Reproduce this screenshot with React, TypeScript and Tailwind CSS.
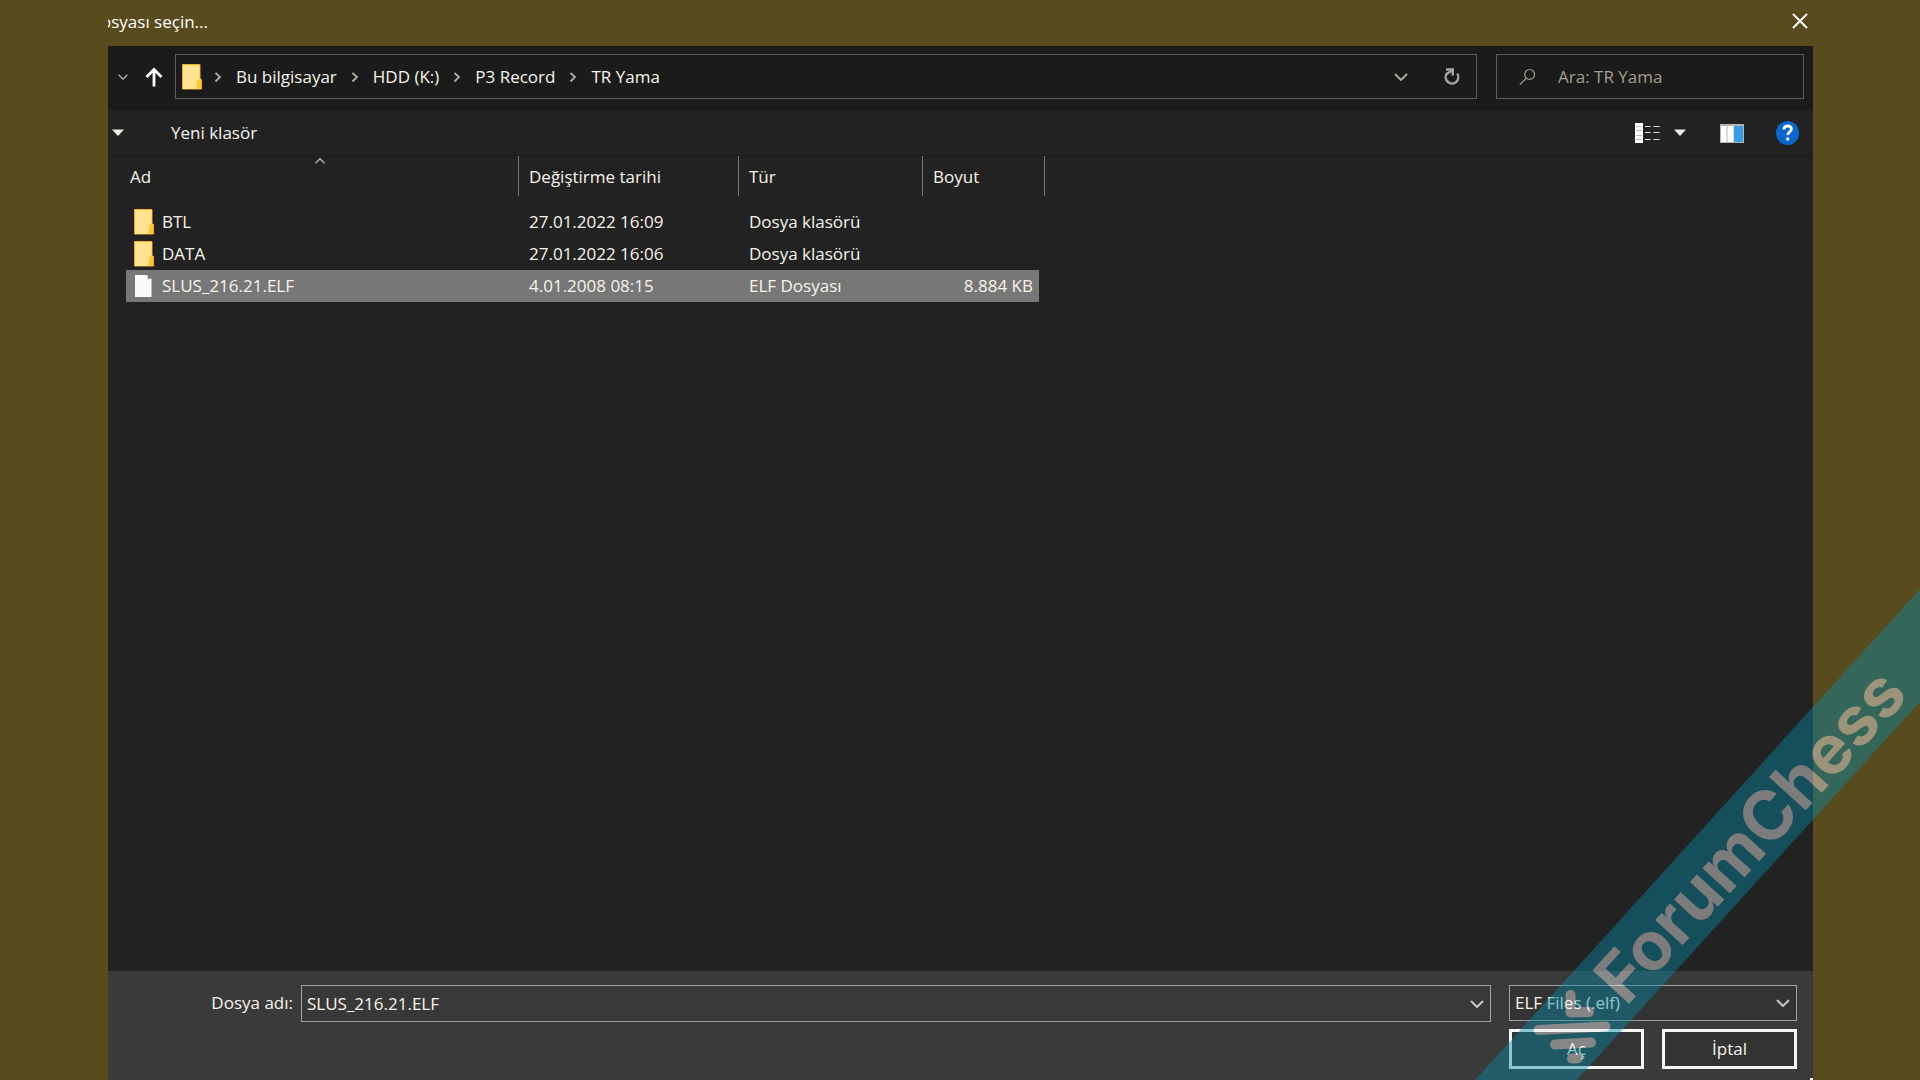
import { Fragment, useState } from 'react';

type FileKind = 'folder' | 'file';

interface FileRow {
  name: string;
  modified: string;
  type: string;
  size: string;
  kind: FileKind;
}

const PATH = ['Bu bilgisayar', 'HDD (K:)', 'P3 Record', 'TR Yama'];

const FILES: FileRow[] = [
  { name: 'BTL', modified: '27.01.2022 16:09', type: 'Dosya klasörü', size: '', kind: 'folder' },
  { name: 'DATA', modified: '27.01.2022 16:06', type: 'Dosya klasörü', size: '', kind: 'folder' },
  { name: 'SLUS_216.21.ELF', modified: '4.01.2008 08:15', type: 'ELF Dosyası', size: '8.884 KB', kind: 'file' },
];

// --- Icons ---
const Chevron = ({ className }: { className: string }) => (
  <svg className={className} viewBox="0 0 14 8" fill="none" stroke="currentColor" strokeWidth="2">
    <path d="M1 1l6 6 6-6" />
  </svg>
);

const CrumbChevron = () => (
  <svg className="h-3 w-2 text-[#b5aca0]" viewBox="0 0 8 12" fill="none" stroke="currentColor" strokeWidth="1.8">
    <path d="M1.5 2L6 6l-4.500 4.500" />
  </svg>
);

const Caret = () => (
  <svg className="h-2 w-3 text-[#f0ece2]" viewBox="0 0 12 8" fill="currentColor">
    <path d="M0 0.500h12L6 7z" />
  </svg>
);

const FolderIcon = () => (
  <svg className="h-[26px] w-5 shrink-0" viewBox="0 0 20 26">
    <path d="M0.500 0.500h17.500v14l1.500 1v9.500h-19z" fill="#fbcf45" stroke="#e8ae1c" />
    <path d="M1 1h16.500v13.500l-2.500 3L14.500 25H1z" fill="#ffe391" />
    <path d="M17.500 14.500l1.500 1.500v9h-4l.5-7.500z" fill="#ffc629" />
  </svg>
);

const FileIcon = () => (
  <svg className="h-[26px] w-5 shrink-0" viewBox="0 0 20 26">
    <path d="M1 2h12l4.500 4v18H1z" fill="#fafafa" />
    <path d="M13 2v4h4.500z" fill="#5b6468" />
    <path d="M13.500 2.500v3.500h4" fill="none" stroke="#d8dcdc" />
  </svg>
);

const UpArrow = () => (
  <svg className="h-5 w-[18px]" viewBox="0 0 18 20" fill="none" stroke="#fff" strokeWidth="2.800">
    <path d="M9 19.500V3M1.500 10L9 2.500l7.500 7.500" />
  </svg>
);

const RefreshIcon = () => (
  <svg className="h-[18px] w-4" viewBox="0 0 16 18" fill="none" stroke="#aaa59d" strokeWidth="2.400">
    <path d="M13.200 5.600a6.300 6.300 0 1 1-10.600.300L8 2.400" />
    <path d="M2 1.500h6.800v6" />
  </svg>
);

const SearchIcon = () => (
  <svg className="h-5 w-5" viewBox="0 0 20 20" fill="none" stroke="#a49e8d" strokeWidth="1.400">
    <circle cx="12.500" cy="7" r="5.800" />
    <path d="M8.500 11.500L1 19" />
  </svg>
);

const CloseIcon = () => (
  <svg className="size-4" viewBox="0 0 16 16" fill="none" stroke="#fff" strokeWidth="1.800">
    <path d="M1 1l14 14M15 1L1 15" />
  </svg>
);

const ViewIcon = () => (
  <svg className="h-5 w-[25px]" viewBox="0 0 25 20">
    <rect width="8" height="20" fill="#fff" />
    <path d="M1 3.500h6M1 7.500h6M1 12.500h6M1 16.500h6" stroke="#b9bcc0" />
    <path d="M10 3.500h5.500M18.500 3.500h6M10 9.500h5.500M18.500 9.500h6M10 16.500h5.500M18.500 16.500h6" stroke="#e4e0dc" />
  </svg>
);

const PaneIcon = () => (
  <svg className="h-5 w-6" viewBox="0 0 24 20">
    <rect y="1" width="24" height="19" fill="#b9b4b4" />
    <rect x="1" y="3" width="5.500" height="16" fill="#fff" />
    <rect x="7.500" y="3" width="6" height="16" fill="#fff" />
    <rect x="14" y="3" width="9" height="16" fill="#349fe8" />
  </svg>
);

const HelpIcon = () => (
  <svg className="h-6 w-[23px]" viewBox="0 0 23 24">
    <ellipse cx="11.500" cy="12" rx="11.500" ry="12" fill="#0b66cf" />
    <path d="M8 8.500c0-4.600 7.400-4.600 7.400-.400 0 2.900-3.700 2.900-3.700 6" fill="none" stroke="#fff" strokeWidth="2.800" />
    <circle cx="11.700" cy="18" r="1.700" fill="#fff" />
  </svg>
);

// --- Corner ribbon ---
const Ribbon = () => (
  <svg
    className="pointer-events-none absolute right-0 bottom-0 h-[490px] w-[445px]"
    viewBox="0 0 445 490"
    aria-hidden="true"
  >
    <g opacity="0.43">
      <path d="M0 490L444 0h1v111.700L101.700 490z" fill="#068ba9" />
      <text
        transform="translate(151 417) rotate(-47.6)"
        fill="#f3f3f3"
        className="font-['Inter',sans-serif] text-[68px] font-bold"
      >
        ForumChess
      </text>
      <g fill="none" stroke="#f3f3f3" strokeWidth="10" strokeLinecap="round" strokeLinejoin="round">
        <path d="M95.500 405v17.500l18.500-.500" />
        <path d="M63.500 440l67-3.500" />
        <path d="M80 454.500l36-2" />
        <path d="M97 468.500l6-.300" />
      </g>
    </g>
  </svg>
);

export default function App() {
  const [selected, setSelected] = useState('SLUS_216.21.ELF');

  return (
    <div className="relative flex min-h-screen flex-col overflow-hidden bg-[#584b1e] pr-[107px] pl-[108px] font-['Open_Sans','Noto_Sans',sans-serif] text-[17px] leading-6 text-[#f8f4ea]">
      <header className="flex h-[46px] items-center justify-between pr-[5px] pb-1">
        <div className="overflow-hidden">
          <h1 className="-ml-[7px] pt-[2px] font-medium whitespace-nowrap text-white">osyası seçin...</h1>
        </div>
        <button type="button" aria-label="Kapat">
          <CloseIcon />
        </button>
      </header>

      <main className="flex flex-1 flex-col bg-[#222]">
        <nav className="flex h-16 items-center bg-[#1b1b1b] pr-[9px] pb-[3px] pl-2">
          <button type="button" aria-label="Son konumlar" className="flex w-[14px] justify-center">
            <Chevron className="h-[6px] w-[10px] text-[#b5aca0]" />
          </button>
          <button type="button" aria-label="Yukarı" className="ml-[15px]">
            <UpArrow />
          </button>
          <div className="ml-3 flex h-[45px] flex-1 items-center border border-[#5c5c56] pr-4 pl-[6px]">
            <FolderIcon />
            <ol className="ml-3 flex flex-1 items-center gap-[14px]">
              {PATH.map((part) => (
                <Fragment key={part}>
                  <li aria-hidden="true">
                    <CrumbChevron />
                  </li>
                  <li>
                    <button type="button" className="font-medium">
                      {part}
                    </button>
                  </li>
                </Fragment>
              ))}
            </ol>
            <button type="button" aria-label="Önceki konumlar">
              <Chevron className="h-2 w-[14px] text-[#aaa59d]" />
            </button>
            <button type="button" aria-label="Yenile" className="ml-9">
              <RefreshIcon />
            </button>
          </div>
          <label className="ml-[19px] flex h-[45px] w-[308px] items-center border border-[#5c5c56] px-[22px]">
            <SearchIcon />
            <input
              type="search"
              aria-label="Ara"
              placeholder="Ara: TR Yama"
              className="ml-[22px] w-full min-w-0 bg-transparent outline-none placeholder:text-[#a49e8d]"
            />
          </label>
        </nav>

        <div className="flex h-[46px] items-center border-b border-[#1b1b1b] pr-[14px] pl-1">
          <button type="button" aria-label="Düzenle">
            <Caret />
          </button>
          <button type="button" className="ml-[47px]">
            Yeni klasör
          </button>
          <button type="button" aria-label="Görünüm" className="ml-auto">
            <ViewIcon />
          </button>
          <button type="button" aria-label="Diğer seçenekler" className="ml-[14px]">
            <Caret />
          </button>
          <button type="button" aria-label="Önizleme bölmesi" className="ml-[34px]">
            <PaneIcon />
          </button>
          <button type="button" aria-label="Yardım" className="ml-8">
            <HelpIcon />
          </button>
        </div>

        <section className="flex-1 pl-[18px]">
          <table className="w-[919px] table-fixed border-collapse text-left">
            <colgroup>
              <col className="w-[393px]" />
              <col className="w-[220px]" />
              <col className="w-[184px]" />
              <col className="w-[116px]" />
              <col className="w-[6px]" />
            </colgroup>
            <thead>
              <tr className="h-[50px] align-top">
                <th scope="col" aria-sort="ascending" className="p-0 font-normal">
                  <div className="relative flex h-10 items-center border-r border-[#77736e] pt-[2px] pl-1">
                    Ad
                    <Chevron className="absolute top-[2px] left-[188px] h-[6px] w-3 rotate-180 text-[#b8ae9c]" />
                  </div>
                </th>
                <th scope="col" className="p-0 font-normal">
                  <div className="flex h-10 items-center border-r border-[#77736e] pt-[2px] pl-[10px]">
                    Değiştirme tarihi
                  </div>
                </th>
                <th scope="col" className="p-0 font-normal">
                  <div className="flex h-10 items-center border-r border-[#77736e] pt-[2px] pl-[10px]">Tür</div>
                </th>
                <th scope="col" colSpan={2} className="p-0 font-normal">
                  <div className="flex h-10 items-center border-r border-[#77736e] pt-[2px] pl-[10px]">Boyut</div>
                </th>
              </tr>
            </thead>
            <tbody>
              {FILES.map((file) => {
                const cell = file.name === selected ? 'bg-[#777]' : '';
                return (
                  <tr key={file.name} className="h-8" onClick={() => setSelected(file.name)}>
                    <td className={`py-0 pr-0 pl-2 ${cell}`}>
                      <div className="flex items-center gap-2">
                        {file.kind === 'folder' ? <FolderIcon /> : <FileIcon />}
                        {file.name}
                      </div>
                    </td>
                    <td className={`py-0 pr-0 pl-[10px] ${cell}`}>{file.modified}</td>
                    <td className={`py-0 pr-0 pl-[10px] ${cell}`}>{file.type}</td>
                    <td className={`py-0 pr-[6px] pl-0 text-right ${cell}`}>{file.size}</td>
                    <td className="p-0" />
                  </tr>
                );
              })}
            </tbody>
          </table>
        </section>

        <footer className="relative h-[109px] bg-[#3a3a3a] pt-[14px] pr-4">
          <div className="flex items-start">
            <label htmlFor="file-name" className="w-[193px] pt-[6px] pr-2 text-right">
              Dosya adı:
            </label>
            <div className="flex h-[37px] flex-1 items-center border border-[#a39f99] bg-[#383838] pr-[6px]">
              <input
                id="file-name"
                value={selected}
                onChange={(e) => setSelected(e.target.value)}
                className="min-w-0 flex-1 bg-transparent pl-[5px] outline-none"
              />
              <button type="button" aria-label="Önceki dosyalar">
                <Chevron className="h-2 w-[14px] text-[#c9c5c0]" />
              </button>
            </div>
            <div className="relative ml-[18px] w-[288px]">
              <select
                aria-label="Dosya türü"
                className="h-9 w-full appearance-none border border-[#a39f99] bg-[#333] pl-[5px] outline-none"
              >
                <option>ELF Files (.elf)</option>
              </select>
              <Chevron className="pointer-events-none absolute top-[14px] right-[7px] h-2 w-[14px] text-[#c9c5c0]" />
            </div>
          </div>
          <div className="mt-[7px] flex justify-end gap-[18px]">
            <button type="button" className="h-10 w-[135px] border-[3px] border-[#f5f5f5] bg-[#333]">
              Aç
            </button>
            <button type="button" className="h-10 w-[135px] border-[3px] border-[#f5f5f5] bg-[#333]">
              İptal
            </button>
          </div>
          <span className="absolute right-0 bottom-0 h-[2px] w-[3px] bg-[#f5f5f5]" />
        </footer>
      </main>

      <Ribbon />
    </div>
  );
}
